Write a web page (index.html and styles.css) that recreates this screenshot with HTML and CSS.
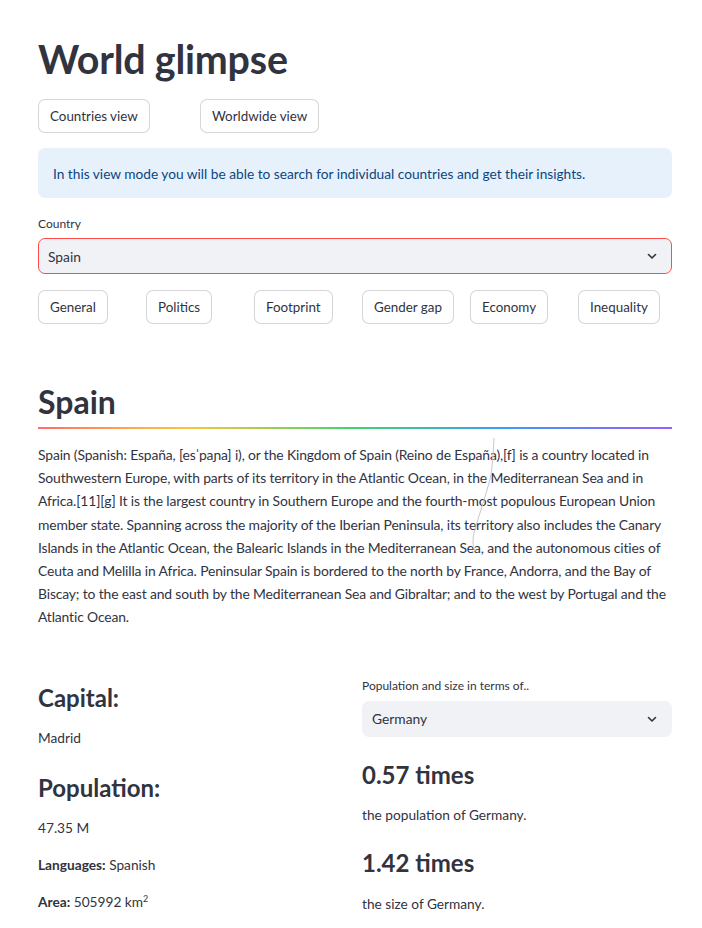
FILE: index.html
```html
<!DOCTYPE html>
<html>
<head>
<meta charset="utf-8">
<link rel="stylesheet" href="styles.css">
</head>
<body>
<main class="page">
  <h1 class="title">World glimpse</h1>

  <div class="cols4">
    <div><button class="btn">Countries view</button></div>
    <div><button class="btn">Worldwide view</button></div>
    <div></div>
    <div></div>
  </div>

  <div class="info">In this view mode you will be able to search for individual countries and get their insights.</div>

  <div class="field">
    <label class="label">Country</label>
    <div class="select focused">
      <span>Spain</span>
      <svg class="chev" width="12" height="12" viewBox="0 0 12 12"><path d="M2.5 4.5 L6 8 L9.5 4.5" fill="none" stroke="#31333f" stroke-width="1.6" stroke-linecap="round" stroke-linejoin="round"/></svg>
    </div>
  </div>

  <div class="cols6">
    <div><button class="btn">General</button></div>
    <div><button class="btn">Politics</button></div>
    <div><button class="btn">Footprint</button></div>
    <div><button class="btn">Gender gap</button></div>
    <div><button class="btn">Economy</button></div>
    <div><button class="btn">Inequality</button></div>
  </div>

  <h2 class="country">Spain</h2>
  <div class="rainbow"></div>

  <div class="desc-wrap">
    <p class="desc">Spain (Spanish: España, [esˈpaɲa] i), or the Kingdom of Spain (Reino de España),[f] is a country located in Southwestern Europe, with parts of its territory in the Atlantic Ocean, in the Mediterranean Sea and in Africa.[11][g] It is the largest country in Southern Europe and the fourth-most populous European Union member state. Spanning across the majority of the Iberian Peninsula, its territory also includes the Canary Islands in the Atlantic Ocean, the Balearic Islands in the Mediterranean Sea, and the autonomous cities of Ceuta and Melilla in Africa. Peninsular Spain is bordered to the north by France, Andorra, and the Bay of Biscay; to the east and south by the Mediterranean Sea and Gibraltar; and to the west by Portugal and the Atlantic Ocean.</p>
    <svg class="stray" width="40" height="120" viewBox="0 0 40 120"><path d="M36 0 C35 20 34 35 31 45 C27 60 20 80 16 95 C14 104 15 110 18 113" fill="none" stroke="#c8c8cc" stroke-width="1"/></svg>
  </div>

  <div class="cols2">
    <div class="col">
      <h3 class="h3 cap">Capital:</h3>
      <p class="txt t-madrid">Madrid</p>
      <h3 class="h3 pop">Population:</h3>
      <p class="txt t-num">47.35 M</p>
      <p class="txt t-line"><b>Languages:</b> Spanish</p>
      <p class="txt t-line"><b>Area:</b> 505992 km<sup>2</sup></p>
    </div>
    <div class="col">
      <label class="label small">Population and size in terms of..</label>
      <div class="select">
        <span>Germany</span>
        <svg class="chev" width="12" height="12" viewBox="0 0 12 12"><path d="M2.5 4.5 L6 8 L9.5 4.5" fill="none" stroke="#31333f" stroke-width="1.6" stroke-linecap="round" stroke-linejoin="round"/></svg>
      </div>
      <h3 class="h3 times">0.57 times</h3>
      <p class="txt t-after">the population of Germany.</p>
      <h3 class="h3 times">1.42 times</h3>
      <p class="txt t-after">the size of Germany.</p>
    </div>
  </div>
</main>
</body>
</html>
```

FILE: styles.css
```css
* { box-sizing: border-box; }
html, body { margin: 0; padding: 0; background: #ffffff; }
body {
  font-family: Lato, "Noto Sans", sans-serif;
  color: #31333f;
  font-size: 13.9px;
}
.page {
  width: 634px;
  margin: 0 0 0 38px;
  padding-top: 34px;
}
.title {
  margin: 0;
  font-size: 39.4px;
  font-weight: 700;
  line-height: 50px;
  letter-spacing: -0.2px;
}
.cols4 {
  display: grid;
  grid-template-columns: repeat(4, 1fr);
  column-gap: 14px;
  margin-top: 15px;
}
.cols6 {
  display: grid;
  grid-template-columns: repeat(6, 1fr);
  column-gap: 14px;
  margin-top: 16px;
}
.btn {
  font-family: inherit;
  font-size: 13.4px;
  color: #31333f;
  background: #fff;
  border: 1px solid rgba(49, 51, 63, 0.2);
  border-radius: 7px;
  height: 34px;
  padding: 0 11px;
  line-height: 32px;
  white-space: nowrap;
}
.info {
  margin-top: 15px;
  background: #e7f1fc;
  color: #0a4680;
  border-radius: 7px;
  height: 50px;
  padding: 0 15px;
  display: flex;
  align-items: center;
  font-size: 13.7px;
}
.field { margin-top: 18px; }
.label {
  display: block;
  font-size: 12px;
  line-height: 16px;
  margin-bottom: 6px;
}
.select {
  height: 36px;
  background: #f0f2f6;
  border-radius: 7px;
  border: 1px solid #f0f2f6;
  display: flex;
  align-items: center;
  justify-content: space-between;
  padding: 0 13px 0 9px;
  font-size: 13.8px;
}
.select.focused { border-color: #ff4b4b; }
.chev { display: block; }
.country {
  margin: 58px 0 0 0;
  font-size: 32px;
  font-weight: 700;
  line-height: 40px;
}
.rainbow {
  margin-top: 5px;
  height: 2px;
  background: linear-gradient(90deg, #ff6c6c 0%, #fdaa4a 15%, #fcc43c 24%, #3dd56d 50%, #3d9df3 73%, #9a5dff 100%);
}
.desc-wrap { position: relative; }
.desc {
  margin: 14px 0 0 0;
  font-size: 13.9px;
  line-height: 23.2px;
  letter-spacing: -0.14px;
}
.stray {
  position: absolute;
  left: 420px;
  top: -5px;
}
.cols2 {
  display: grid;
  grid-template-columns: 1fr 1fr;
  column-gap: 14px;
  margin-top: 49px;
}
.col { display: flex; flex-direction: column; }
.h3 {
  margin: 0;
  font-size: 24px;
  font-weight: 700;
  line-height: 34px;
}
.cap { margin-top: 3px; }
.pop { margin-top: 23px; }
.txt {
  margin: 0;
  font-size: 13.7px;
  line-height: 20px;
}
.t-madrid, .t-num, .t-after { margin-top: 13px; }
.t-line { margin-top: 17px; }
.t-after:last-child { margin-top: 14px; }
.txt b { font-weight: 700; }
.txt sup { font-size: 9px; vertical-align: 5px; line-height: 0; }
.label.small { font-size: 12px; margin-bottom: 7px; }
.times { margin-top: 21px; }
```
